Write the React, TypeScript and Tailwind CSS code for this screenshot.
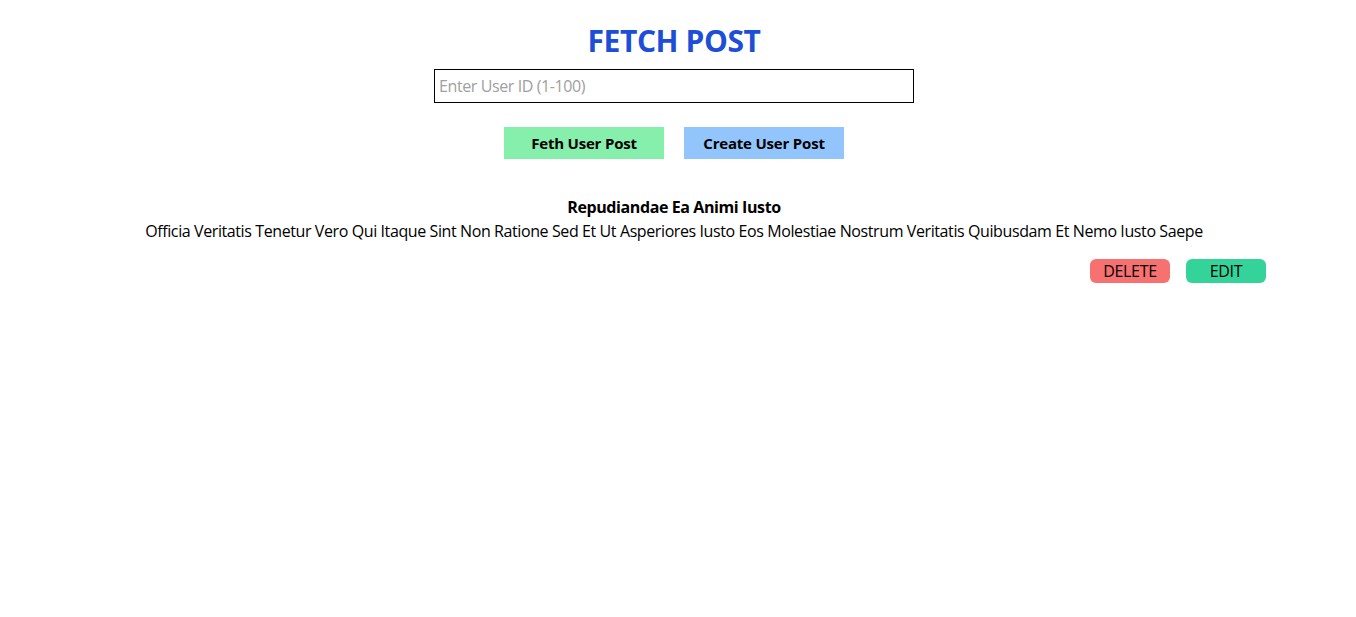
import { useState } from "react";

const App = () => {
    const [userId, setUserId] = useState('');

    return (
        <div className="w-[1348px] min-h-screen bg-white text-black font-['Open_Sans',sans-serif]">
            <div className="flex flex-col items-center pt-[22px]">
                <h1 className="text-[30px] leading-[38px] font-bold text-[#1d4ed8] tracking-[-0.4px]">FETCH POST</h1>
                <input
                    className="mt-[9px] w-[480px] h-[34px] border border-black px-[4px] text-[16px] tracking-[-0.4px] outline-none placeholder:text-[#a0a0a0]"
                    placeholder="Enter User ID (1-100)"
                    value={userId}
                    onChange={(e) => setUserId(e.target.value)}
                />
                <div className="flex gap-5 mt-[24px]">
                    <button className="w-40 h-8 bg-[#86efac] font-bold text-[15px] tracking-[-0.2px]">Feth User Post</button>
                    <button className="w-40 h-8 bg-[#93c5fd] font-bold text-[15px] tracking-[-0.2px]">Create User Post</button>
                </div>
            </div>

            <div className="mt-[36px] flex flex-col items-center text-[16px] tracking-[-0.4px]">
                <h2 className="font-bold leading-6">Repudiandae Ea Animi Iusto</h2>
                <p className="leading-6">
                    Officia Veritatis Tenetur Vero Qui Itaque Sint Non Ratione Sed Et Ut Asperiores Iusto Eos Molestiae Nostrum Veritatis Quibusdam Et Nemo Iusto Saepe
                </p>
            </div>
            <div className="flex justify-end gap-4 pr-[82px] mt-[16px]">
                <button className="w-20 h-6 rounded-md bg-[#f87171] text-[16px] tracking-[-0.3px]">DELETE</button>
                <button className="w-20 h-6 rounded-md bg-[#34d399] text-[16px] tracking-[-0.3px]">EDIT</button>
            </div>
        </div>
    );
}

export default App;
